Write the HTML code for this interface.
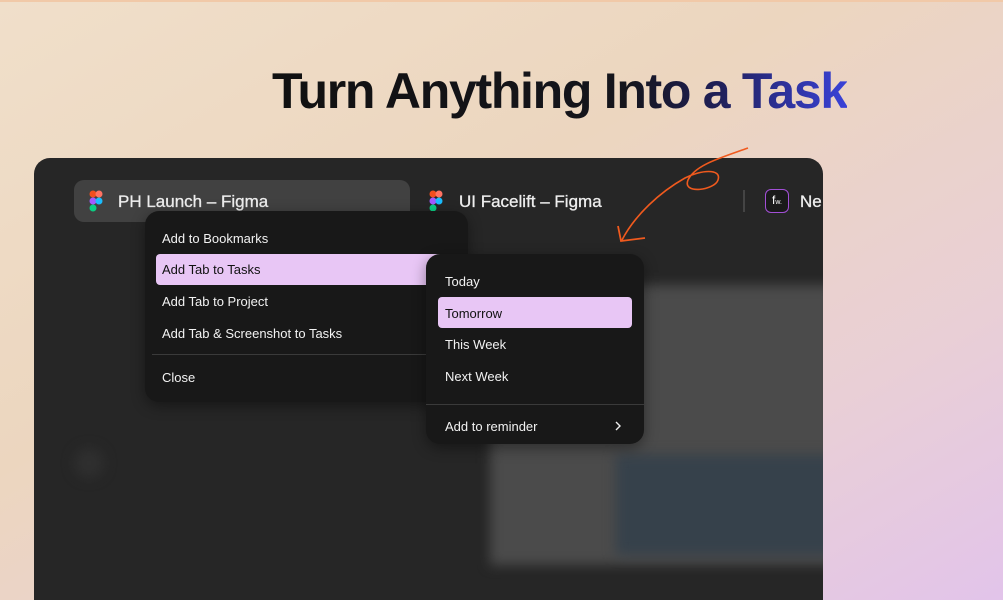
<!DOCTYPE html>
<html><head><style>
*{margin:0;padding:0;box-sizing:border-box}
html,body{width:1003px;height:600px;overflow:hidden}
body{position:relative;font-family:"Liberation Sans",sans-serif;
background:linear-gradient(150deg,#f0dfca 0%,#ecd6bf 40%,#e9cfd6 75%,#e2c4ea 100%)}
.topline{position:absolute;left:0;top:0;width:1003px;height:2px;background:#f1c9a8}
h1{position:absolute;left:272px;top:62px;font-size:50px;font-weight:700;letter-spacing:-1.3px;white-space:nowrap;
background:linear-gradient(90deg,#111 0%,#15151c 62%,#20205a 78%,#3a42d8 100%);-webkit-background-clip:text;background-clip:text;color:transparent}
.win{position:absolute;left:34px;top:158px;width:789px;height:442px;background:#262626;border-radius:16px 16px 0 0;overflow:hidden}
.blk{position:absolute;filter:blur(6px)}
.tab{position:absolute;font-size:17px;color:#eee;-webkit-text-stroke:0.3px #eee}
.menu{position:absolute;background:#181818;border-radius:14px;box-shadow:0 4px 14px rgba(0,0,0,.4)}
.it{position:absolute;font-size:13px;color:#f2f2f2}
.hl{position:absolute;background:#e8c6f5;border-radius:4px}
.sep{position:absolute;height:1px;background:#3a3a3a}
</style></head><body>
<div class="topline"></div>
<h1>Turn Anything Into a Task</h1>
<div class="win">
 <div class="blk" style="left:456px;top:127px;width:345px;height:280px;background:#4b4b4b"></div>
 <div class="blk" style="left:582px;top:297px;width:225px;height:100px;background:#36414b"></div>
 <div class="blk" style="left:40px;top:290px;width:30px;height:30px;border-radius:50%;background:#2f2f2f"></div>
 <div style="position:absolute;left:40px;top:22px;width:336px;height:42px;background:#414141;border-radius:10px"></div>
 <div style="position:absolute;left:709px;top:32px;width:2px;height:22px;background:#444"></div>
 <div style="position:absolute;left:731px;top:31px;width:24px;height:24px;border:1.5px solid #a24fd6;border-radius:6px;background:#1a1a1a;color:#fff;font-size:12px;text-align:center;line-height:21px">f<span style="font-size:7px">w.</span></div>
 <div class="tab" style="left:766px;top:34px">Ne</div>
</div>
<svg style="position:absolute;left:89px;top:190px" width="14" height="22" viewBox="0 0 14 22"><circle cx="4" cy="4" r="3.5" fill="#f24e1e"/><circle cx="10" cy="4" r="3.5" fill="#ff7262"/><circle cx="4" cy="11" r="3.5" fill="#a259ff"/><circle cx="10" cy="11" r="3.5" fill="#1abcfe"/><circle cx="4" cy="18" r="3.5" fill="#0acf83"/></svg>
<div class="tab" style="left:118px;top:192px">PH Launch – Figma</div>
<svg style="position:absolute;left:429px;top:190px" width="14" height="22" viewBox="0 0 14 22"><circle cx="4" cy="4" r="3.5" fill="#f24e1e"/><circle cx="10" cy="4" r="3.5" fill="#ff7262"/><circle cx="4" cy="11" r="3.5" fill="#a259ff"/><circle cx="10" cy="11" r="3.5" fill="#1abcfe"/><circle cx="4" cy="18" r="3.5" fill="#0acf83"/></svg>
<div class="tab" style="left:459px;top:192px">UI Facelift – Figma</div>
<div class="menu" style="left:145px;top:211px;width:323px;height:191px"></div>
<div class="hl" style="left:156px;top:254px;width:290px;height:31px"></div>
<div class="it" style="left:162px;top:231px">Add to Bookmarks</div>
<div class="it" style="left:162px;top:262px;color:#111">Add Tab to Tasks</div>
<div class="it" style="left:162px;top:294px">Add Tab to Project</div>
<div class="it" style="left:162px;top:326px">Add Tab &amp; Screenshot to Tasks</div>
<div class="sep" style="left:152px;top:354px;width:290px"></div>
<div class="it" style="left:162px;top:370px">Close</div>
<div class="menu" style="left:426px;top:254px;width:218px;height:190px"></div>
<div class="it" style="left:445px;top:274px">Today</div>
<div class="hl" style="left:438px;top:297px;width:194px;height:31px"></div>
<div class="it" style="left:445px;top:306px;color:#111">Tomorrow</div>
<div class="it" style="left:445px;top:337px">This Week</div>
<div class="it" style="left:445px;top:369px">Next Week</div>
<div class="sep" style="left:426px;top:404px;width:218px"></div>
<div class="it" style="left:445px;top:419px">Add to reminder</div>
<svg style="position:absolute;left:614px;top:420px" width="8" height="12"><path d="M2 2 L6 6 L2 10" stroke="#eee" stroke-width="1.4" fill="none"/></svg>
<svg style="position:absolute;left:600px;top:140px" width="160" height="110"><path d="M148 8 C120 18 95 25 88 40 C82 55 115 50 118 40 C122 28 100 30 85 38 C60 52 35 75 22 100" stroke="#f05a1e" stroke-width="1.6" fill="none"/><path d="M18 86 L21 101 L45 98" stroke="#f05a1e" stroke-width="1.8" fill="none"/></svg>
</body></html>
